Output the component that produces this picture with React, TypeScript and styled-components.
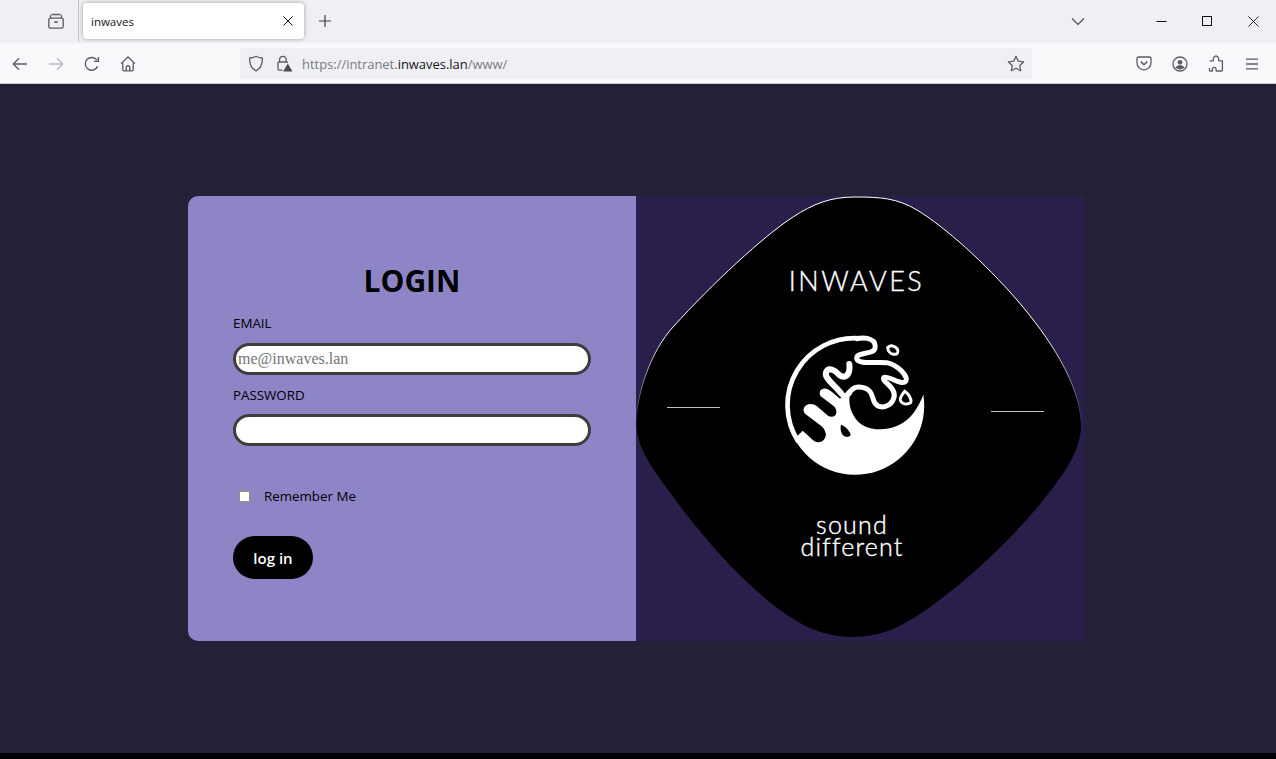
import React from 'react'
import styled, { createGlobalStyle } from 'styled-components'

const GlobalStyle = createGlobalStyle`
  html, body {
    margin: 0;
    padding: 0;
    background: #000;
  }
  * {
    box-sizing: border-box;
  }
`

const BLOB_TOP =
  'M636.500 422C636.500 392 652 350 673 327C713 283 763 236.500 793 217C813 204 830 197 855 197C880 197 897 198 917 210C945 227 985 263 1017 300C1049 337 1081 385 1081 425'
const BLOB_BOTTOM =
  'C1081 452 1062 476 1045 498C1010 542 962 585 923 612C898 629 878 637 853 637C828 637 808 629 790 617C745 587 700 535 663 483C648 462 636.500 445 636.500 422Z'

const App = () => {
  return (
    <Window>
      <GlobalStyle />
      <TabStrip>
        <ViewButton>
          <svg width="18" height="18" viewBox="0 0 18 18" fill="none" stroke="#5b5b66" strokeWidth="1.3">
            <path d="M4.500 2.500h9M3.500 2.800v3.500M14.500 2.800v3.500" />
            <rect x="1.800" y="6.200" width="14.400" height="10" rx="1.600" />
            <path d="M7 10h4" strokeWidth="1.500" />
          </svg>
        </ViewButton>
        <TabDivider />
        <Tab>
          <TabTitle>inwaves</TabTitle>
          <svg width="12" height="12" viewBox="0 0 12 12" stroke="#15141a" strokeWidth="1">
            <path d="M1.500 1.500l9 9M10.500 1.500l-9 9" />
          </svg>
        </Tab>
        <NewTab>
          <svg width="14" height="14" viewBox="0 0 14 14" stroke="#3c3c44" strokeWidth="1.200">
            <path d="M7 1v12M1 7h12" />
          </svg>
        </NewTab>
        <ListTabs>
          <svg width="14" height="9" viewBox="0 0 14 9" fill="none" stroke="#4a4a52" strokeWidth="1.100">
            <path d="M1 1.500l6 6 6-6" />
          </svg>
        </ListTabs>
        <WindowButton>
          <svg width="11" height="11" viewBox="0 0 11 11" stroke="#111" strokeWidth="1">
            <path d="M0.500 5.500h10" />
          </svg>
        </WindowButton>
        <WindowButton>
          <svg width="10" height="10" viewBox="0 0 10 10" fill="none" stroke="#111" strokeWidth="1">
            <rect x="0.500" y="0.500" width="9" height="9" />
          </svg>
        </WindowButton>
        <WindowButton>
          <svg width="11" height="11" viewBox="0 0 11 11" stroke="#111" strokeWidth="0.900">
            <path d="M0.500 0.500l10 10M10.500 0.500l-10 10" />
          </svg>
        </WindowButton>
      </TabStrip>

      <NavBar>
        <NavButton>
          <svg width="16" height="14" viewBox="0 0 16 14" fill="none" stroke="#5b5b66" strokeWidth="1.300">
            <path d="M15 7H1.500M7 1.200L1.200 7 7 12.800" />
          </svg>
        </NavButton>
        <NavButton>
          <svg width="16" height="14" viewBox="0 0 16 14" fill="none" stroke="#b9b9bf" strokeWidth="1.300">
            <path d="M1 7h13.500M9 1.200L14.800 7 9 12.800" />
          </svg>
        </NavButton>
        <NavButton>
          <svg width="16" height="16" viewBox="0 0 16 16" fill="none" stroke="#5b5b66" strokeWidth="1.400">
            <path d="M13.600 10.400A6.400 6.400 0 1 1 13 4.200" />
            <path d="M14.400 1v4.400H10" />
          </svg>
        </NavButton>
        <NavButton>
          <svg width="16" height="16" viewBox="0 0 16 16" fill="none" stroke="#5b5b66" strokeWidth="1.300">
            <path d="M1 7.600L8 1l7 6.600" />
            <path d="M2.800 6.400v7.200c0 .8.500 1.300 1.300 1.300h7.800c.8 0 1.300-.5 1.300-1.300V6.400" />
            <path d="M6.200 15v-4c0-.6.400-1 1-1h1.600c.6 0 1 .4 1 1v4" />
          </svg>
        </NavButton>
        <UrlBar>
          <UrlIcons>
            <svg width="16" height="17" viewBox="0 0 16 17" fill="none" stroke="#5b5b66" strokeWidth="1.300">
              <path d="M8 1.200c2 1.100 4 1.600 6.300 1.800.3 5.600-1.400 10.300-6.300 12.800C3.100 13.300 1.400 8.600 1.700 3 4 2.800 6 2.300 8 1.200z" />
            </svg>
            <svg width="17" height="17" viewBox="0 0 17 17" fill="none" stroke="#5b5b66" strokeWidth="1.300">
              <path d="M3.600 7V4.600a3.300 3.300 0 0 1 6.600 0V7" />
              <path d="M6.500 15.200H3.200c-.8 0-1.200-.4-1.200-1.200V8.200C2 7.400 2.400 7 3.200 7h7.400c.6 0 1 .3 1.100.8" />
              <path d="M11.800 8.500l4.700 8h-9.400z" fill="#4a4a52" stroke="none" />
            </svg>
          </UrlIcons>
          <UrlText>
            https://intranet.<UrlHost>inwaves.lan</UrlHost>/www/
          </UrlText>
          <svg width="18" height="17" viewBox="0 0 18 17" fill="none" stroke="#5b5b66" strokeWidth="1.300">
            <path d="M9 1.300l2.300 4.900 5.300.7-3.900 3.600 1 5.300L9 13.200l-4.700 2.600 1-5.300-3.900-3.600 5.300-.7z" strokeLinejoin="round" />
          </svg>
        </UrlBar>
        <ToolIcons>
          <NavButton>
            <svg width="16" height="15" viewBox="0 0 16 15" fill="none" stroke="#5b5b66" strokeWidth="1.300">
              <path d="M2.200 1h11.600c.7 0 1.200.5 1.200 1.200v4.300c0 4-3.100 7.300-7 7.300s-7-3.300-7-7.300V2.200C1 1.500 1.500 1 2.200 1z" />
              <path d="M4.800 5.600L8 8.700l3.200-3.100" strokeWidth="1.500" />
            </svg>
          </NavButton>
          <NavButton>
            <svg width="16" height="16" viewBox="0 0 16 16" fill="none" stroke="#5b5b66" strokeWidth="1.300">
              <circle cx="8" cy="8" r="7" />
              <circle cx="8" cy="6.300" r="2.400" fill="#5b5b66" stroke="none" />
              <path d="M3.500 11.300c1-1.500 2.600-2.100 4.500-2.100s3.500.6 4.500 2.100c-1 1.300-2.600 2.200-4.500 2.200s-3.500-.9-4.500-2.200z" fill="#5b5b66" stroke="none" />
            </svg>
          </NavButton>
          <NavButton>
            <svg width="16" height="17" viewBox="0 0 16 17" fill="none" stroke="#5b5b66" strokeWidth="1.300">
              <path d="M1.500 5.800h3.300c.6 0 .8-.4.600-.9C5 3.200 6.200 1 8 1s3 2.200 2.600 3.900c-.1.500.1.900.6.900h3.200v9.400c0 .5-.3.800-.8.800H8.500c-.5 0-.7-.4-.5-.8.600-1.500-.3-2.800-1.700-2.800-1.300 0-2.400 1.300-1.700 2.800.2.400 0 .8-.5.800H2.300c-.5 0-.8-.3-.8-.8v-2.200" />
            </svg>
          </NavButton>
          <NavButton>
            <svg width="14" height="12" viewBox="0 0 14 12" stroke="#5b5b66" strokeWidth="1.300">
              <path d="M1 1.200h12M1 6h12M1 10.800h12" />
            </svg>
          </NavButton>
        </ToolIcons>
      </NavBar>

      <Page>
        <Card>
          <LoginPanel>
            <Heading>LOGIN</Heading>
            <FieldLabel>EMAIL</FieldLabel>
            <TextInput type="email" placeholder="me@inwaves.lan" />
            <FieldLabel $spaced>PASSWORD</FieldLabel>
            <TextInput type="password" />
            <RememberRow>
              <Checkbox type="checkbox" />
              <span>Remember Me</span>
            </RememberRow>
            <LoginButton>log in</LoginButton>
          </LoginPanel>

          <BrandPanel>
            <BlobArt viewBox="636 196 448 445">
              <defs>
                <linearGradient id="blobEdge" gradientUnits="userSpaceOnUse" x1="0" y1="197" x2="0" y2="425">
                  <stop offset="0.6" stopColor="#fff" />
                  <stop offset="1" stopColor="#fff" stopOpacity="0" />
                </linearGradient>
              </defs>
              <path fill="#000" d={BLOB_TOP + BLOB_BOTTOM} />
              <path fill="none" stroke="url(#blobEdge)" strokeWidth="1" d={BLOB_TOP} />
              <path d="M667 407.500h53M991 411.500h53" stroke="#c0c0c0" strokeWidth="1" />
            </BlobArt>
            <BrandContent>
              <BrandName>INWAVES</BrandName>
              <BrandLogo viewBox="0 0 570 510">
                <path
                  fill="#fff"
                  d="M490 224A207.500 207.500 0 0 1 104 358L115 345L128 332L148 350C158 360 165 367 175 367C190 367 200 352 197 340C195 330 190 322 180 315L137 283C128 275 128 262 140 255C150 250 162 252 170 258L205 288C215 293 228 290 229 278C230 268 226 262 218 256L184 230C176 222 178 208 190 206C200 205 208 210 215 215L240 236C250 225 260 212 272 205L272 215C266 235 266 260 280 285C295 315 325 328 360 328C400 328 435 312 460 280C472 262 482 245 490 224Z"
                />
                <path fill="none" stroke="#fff" strokeWidth="14" d="M300 55A201 201 0 0 0 115 365" />
                <path
                  fill="none"
                  stroke="#fff"
                  strokeWidth="15"
                  strokeLinecap="round"
                  d="M290 56C325 50 350 60 345 85C340 105 290 95 290 115C292 135 345 125 380 128C415 135 445 170 438 183C425 200 385 165 372 172C362 185 410 200 402 232C395 260 360 270 345 250C335 235 340 210 310 203C290 198 275 205 268 220"
                />
                <path
                  fill="none"
                  stroke="#fff"
                  strokeWidth="18"
                  strokeLinecap="round"
                  d="M268 132C272 165 255 178 238 165C225 150 205 140 198 157C192 175 225 195 245 222"
                />
                <path fill="none" stroke="#fff" strokeWidth="9" d="M383 82C392 75 404 76 412 87C417 97 412 104 401 103C391 102 384 93 383 82Z" />
                <path fill="none" stroke="#fff" strokeWidth="9" d="M434 214C446 222 456 238 452 248C442 256 424 252 421 240C420 230 428 222 434 214Z" />
                <path fill="#000" d="M243 314C256 318 272 336 272 346C264 354 250 352 245 340C241 330 241 322 243 314Z" />
              </BrandLogo>
              <Tagline>
                sound
                <br />
                different
              </Tagline>
            </BrandContent>
          </BrandPanel>
        </Card>
      </Page>
      <BottomEdge />
    </Window>
  )
}

const Window = styled.div`
  width: 1276px;
  height: 759px;
  display: flex;
  flex-direction: column;
  overflow: hidden;
`

const TabStrip = styled.div`
  height: 43px;
  padding-bottom: 1px;
  display: flex;
  align-items: center;
  background: #f0f0f4;
`

const ViewButton = styled.div`
  width: 36px;
  height: 36px;
  margin-left: 38px;
  display: flex;
  align-items: center;
  justify-content: center;
`

const TabDivider = styled.div`
  width: 1px;
  height: 42px;
  margin-left: 4px;
  background: #c4c4ca;
`

const Tab = styled.div`
  width: 221px;
  height: 36px;
  margin-left: 4px;
  padding: 0 10px 0 8px;
  display: flex;
  align-items: center;
  justify-content: space-between;
  background: #fff;
  border-radius: 4px;
  box-shadow: 0 0 4px rgba(0, 0, 0, 0.35);
`

const TabTitle = styled.span`
  font-family: "Open Sans", sans-serif;
  font-size: 11.500px;
  color: #15141a;
`

const NewTab = styled.div`
  width: 32px;
  height: 32px;
  margin-left: 5px;
  display: flex;
  align-items: center;
  justify-content: center;
`

const ListTabs = styled.div`
  width: 36px;
  height: 36px;
  margin-left: auto;
  margin-right: 42px;
  display: flex;
  align-items: center;
  justify-content: center;
`

const WindowButton = styled.div`
  width: 46px;
  height: 42px;
  display: flex;
  align-items: center;
  justify-content: center;
`

const NavBar = styled.div`
  height: 41px;
  padding: 1px 6px 0 2px;
  display: flex;
  align-items: center;
  background: #f9f9fb;
  border-bottom: 1px solid #cfcfd8;
`

const NavButton = styled.div`
  width: 36px;
  height: 36px;
  flex-shrink: 0;
  display: flex;
  align-items: center;
  justify-content: center;
`

const UrlBar = styled.div`
  width: 792px;
  height: 31px;
  margin-left: 94px;
  padding: 0 7px 0 8px;
  display: flex;
  align-items: center;
  background: #f0f0f4;
  border-radius: 4px;
`

const UrlIcons = styled.div`
  width: 54px;
  display: flex;
  gap: 12px;
`

const UrlText = styled.div`
  flex: 1;
  font-family: "Open Sans", sans-serif;
  font-size: 12.950px;
  color: #7a7a84;
`

const UrlHost = styled.span`
  color: #15141a;
`

const ToolIcons = styled.div`
  margin-left: 94px;
  display: flex;
`

const Page = styled.div`
  flex: 1;
  padding: 112px 0 0 188px;
  background: #242038;
`

const Card = styled.div`
  width: 896px;
  height: 445px;
  display: flex;
  border-radius: 10px 0 0 10px;
  overflow: hidden;
`

const LoginPanel = styled.form`
  width: 448px;
  padding: 65px 45px 0;
  display: flex;
  flex-direction: column;
  align-items: flex-start;
  background: #8e85c7;
  font-family: "Open Sans", sans-serif;
  color: #000;
`

const Heading = styled.h1`
  width: 100%;
  margin: 0 0 13px;
  font-size: 30px;
  line-height: 40px;
  font-weight: 700;
  text-align: center;
`

const FieldLabel = styled.label<{ $spaced?: boolean }>`
  height: 18px;
  margin-top: ${props => (props.$spaced ? '11px' : '0')};
  margin-bottom: ${props => (props.$spaced ? '10px' : '11px')};
  font-size: 13.330px;
  line-height: 18px;
`

const TextInput = styled.input`
  width: 358px;
  height: 32px;
  padding: 0 2px;
  background: #fff;
  border: 3px solid #3d3d3d;
  border-radius: 16px;
  outline: none;
  font-family: "Liberation Serif", serif;
  font-size: 16px;

  &::placeholder {
    color: #757575;
  }
`

const RememberRow = styled.div`
  margin: 41px 0 0 5px;
  display: flex;
  align-items: center;
  gap: 13px;
  font-size: 13.330px;
  line-height: 18px;
`

const Checkbox = styled.input`
  appearance: none;
  width: 13px;
  height: 13px;
  margin: 0;
  background: #fff;
  border: 2px solid #8f8f9d;
  border-radius: 2px;
`

const LoginButton = styled.button`
  width: 80px;
  height: 43px;
  margin-top: 31px;
  padding: 0;
  background: #000;
  color: #fff;
  border: 0;
  border-radius: 22px;
  font-family: "Open Sans", sans-serif;
  font-size: 15px;
  font-weight: 600;
`

const BrandPanel = styled.div`
  width: 448px;
  position: relative;
  background: #2a1f4b;
`

const BlobArt = styled.svg`
  position: absolute;
  inset: 0;
  width: 100%;
  height: 100%;
`

const BrandContent = styled.div`
  position: relative;
  padding: 67px 10px 0 0;
  display: flex;
  flex-direction: column;
  align-items: center;
  color: #fff;
`

const BrandName = styled.div`
  margin-left: 3px;
  font-family: "Lato", sans-serif;
  font-size: 27px;
  font-weight: 300;
  line-height: 36px;
  letter-spacing: 2.500px;
  -webkit-text-stroke: 0.350px #fff;
`

const BrandLogo = styled.svg`
  width: 190px;
  height: 170px;
  margin-top: 21px;
`

const Tagline = styled.div`
  margin: 23px 6px 0 0;
  font-family: "Lato", sans-serif;
  font-size: 25px;
  font-weight: 300;
  line-height: 22px;
  letter-spacing: 1.200px;
  text-align: center;
  -webkit-text-stroke: 0.400px #fff;
`

const BottomEdge = styled.div`
  height: 6px;
  background: #000;
`

export default App
